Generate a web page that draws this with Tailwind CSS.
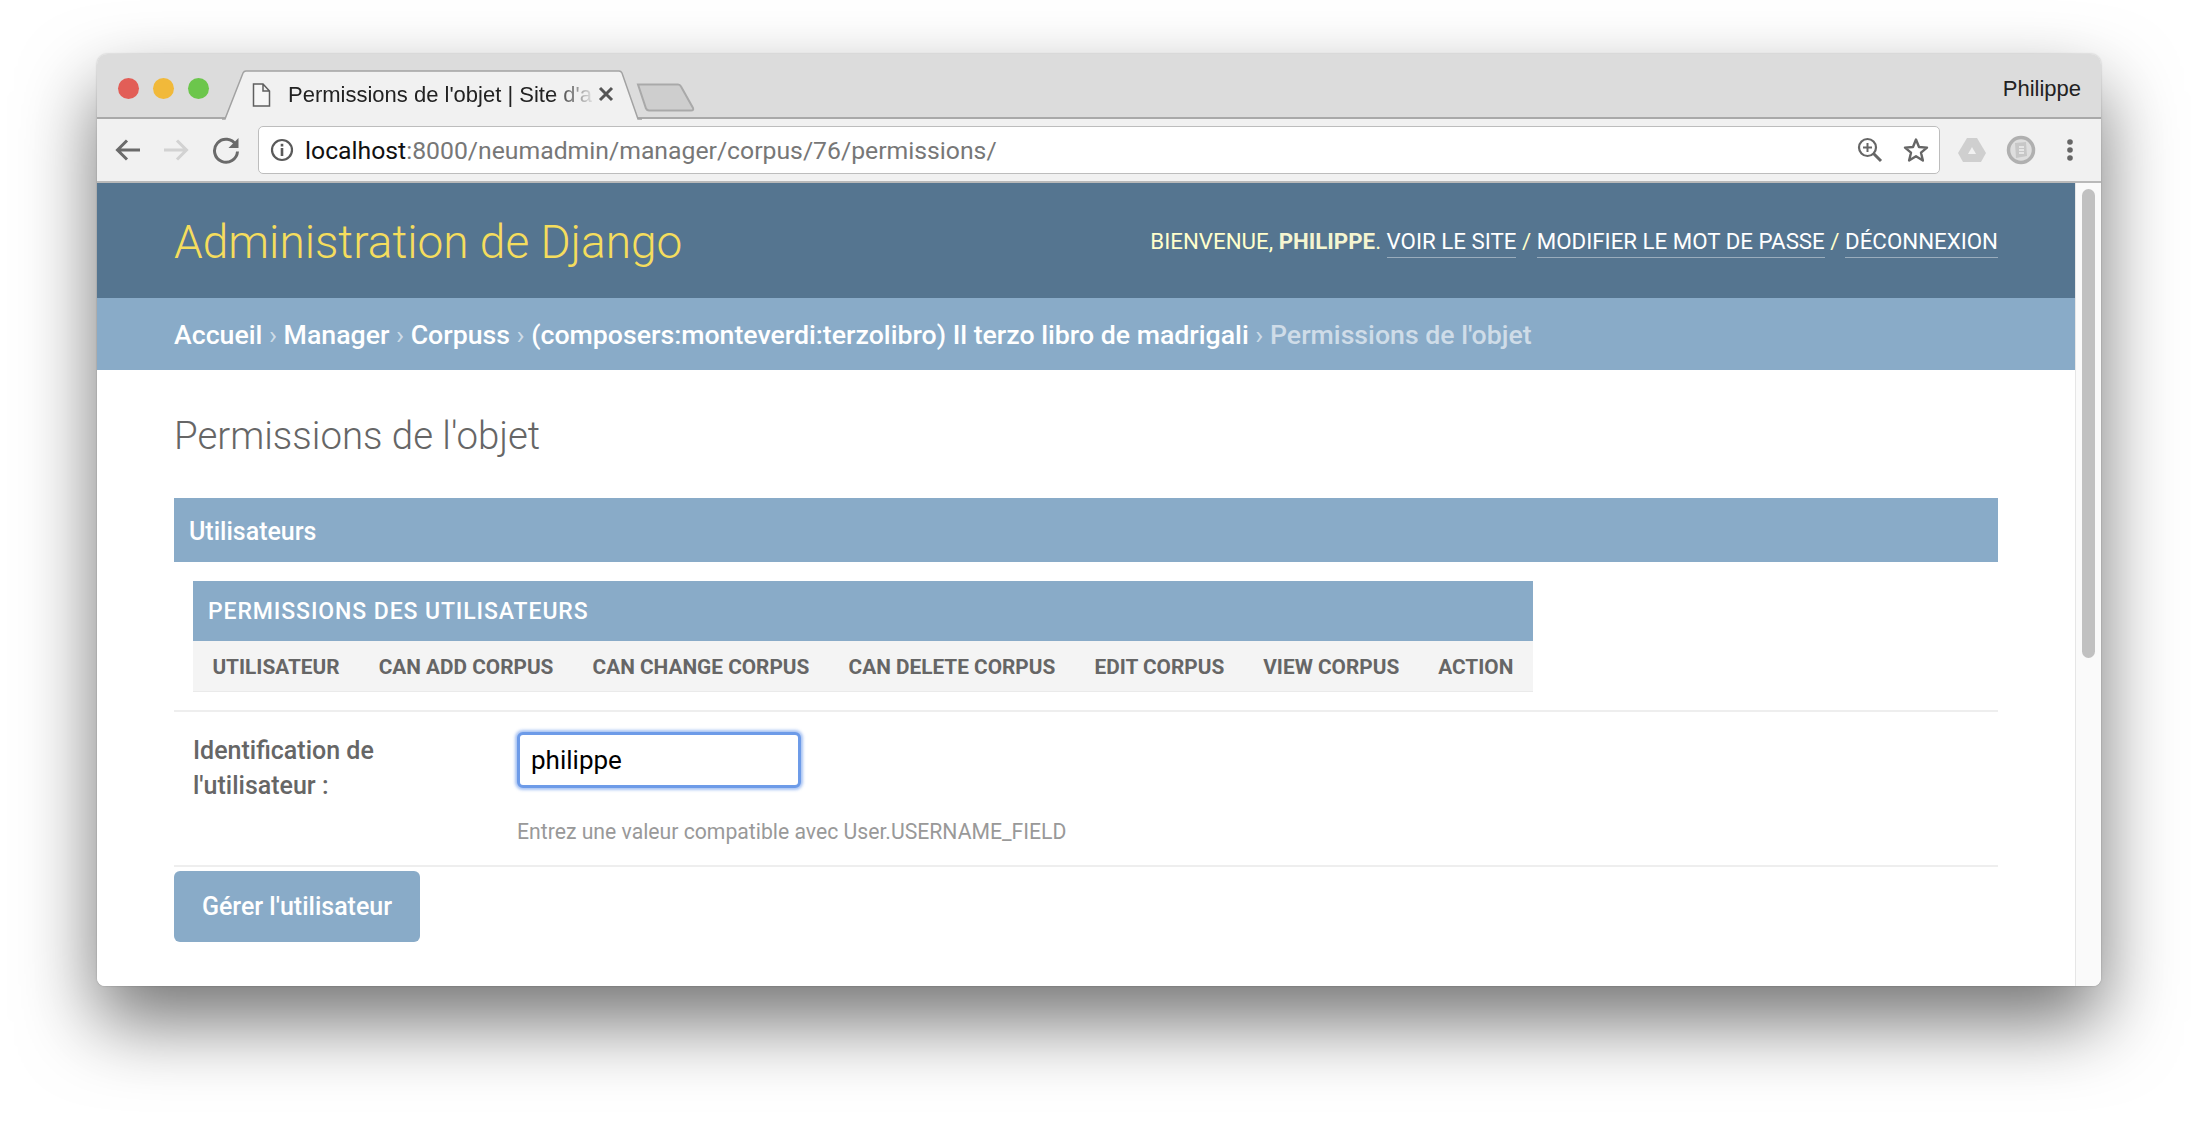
<!DOCTYPE html>
<html lang="fr">
<head>
<meta charset="utf-8">
<title>Permissions de l'objet</title>
<script src="https://cdn.jsdelivr.net/npm/@tailwindcss/browser@4"></script>
</head>
<body class="bg-white w-[2197px] h-[1125px] overflow-hidden font-['Roboto',sans-serif]">
<div class="pt-[54px] pl-[97px]">
  <div class="w-[2004px] h-[932px] rounded-t-[10px] rounded-b-[8px] overflow-hidden flex flex-col shadow-[0_36px_76px_rgba(0,0,0,0.55),0_0_2px_rgba(0,0,0,0.25)] bg-white">
    <!-- tab strip -->
    <div class="relative h-[65px] shrink-0 bg-[#dcdcdc] border-b-2 border-[#a9a9a9] flex items-center justify-end pr-[20px] pt-[6px]">
      <span class="absolute left-[21px] top-[24px] w-[21px] h-[21px] rounded-full bg-[#e25e57]"></span>
      <span class="absolute left-[56px] top-[24px] w-[21px] h-[21px] rounded-full bg-[#f1b93a]"></span>
      <span class="absolute left-[91px] top-[24px] w-[21px] h-[21px] rounded-full bg-[#6cc64c]"></span>
      <svg class="absolute left-[125px] top-[16px]" width="420" height="50" viewBox="0 0 420 50"><path d="M0 49 H3 L21 3 Q22 1 24 1 H397 Q399 1 400 3 L416 49 H420" fill="#f1f1f1" stroke="#a2a2a2" stroke-width="1.5"/></svg>
      <svg class="absolute left-[539px] top-[29px]" width="59" height="29" viewBox="0 0 59 29"><path d="M2 1.5 H42 Q44 1.5 45 3.5 L57 25 Q58 27.500 55 27.500 H13 Q11 27.500 10 25.500 Z" fill="#cecece" stroke="#a9a9a9" stroke-width="2"/></svg>
      <svg class="absolute left-[155px] top-[29px]" width="19" height="24" viewBox="0 0 19 24"><path d="M1.500 1 H11 L17.500 8 V23 H1.500 Z M11 1 V8 H17.500" fill="#fff" fill-opacity="0.4" stroke="#5f5f5f" stroke-width="1.500"/></svg>
      <span class="absolute left-[191px] top-[29px] w-[308px] h-[26px] whitespace-nowrap text-[22px] leading-[24px] text-[#222] font-['Liberation_Sans',sans-serif] [mask-image:linear-gradient(to_right,black_86%,transparent_100%)]">Permissions de l'objet | Site d'a</span>
      <svg class="absolute left-[501px] top-[32px]" width="16" height="16" viewBox="0 0 16 16"><path d="M2 2 L14 14 M14 2 L2 14" stroke="#555" stroke-width="3"/></svg>
      <span class="text-[22px] text-[#222] font-['Liberation_Sans',sans-serif] leading-none">Philippe</span>
    </div>
    <!-- toolbar -->
    <div class="h-[64px] shrink-0 bg-[#f1f1f1] border-b-2 border-[#b9b9b9] flex items-center pl-[16px] pr-[20px]">
      <svg width="30" height="30" viewBox="0 0 30 30" class="mr-[18px]"><path d="M27 15 H5 M14 5.500 L4.500 15 L14 24.500" fill="none" stroke="#6a6a6a" stroke-width="3"/></svg>
      <svg width="30" height="30" viewBox="0 0 30 30" class="mr-[19px]"><path d="M3 15 H25 M16 5.500 L25.500 15 L16 24.500" fill="none" stroke="#d2d2d2" stroke-width="3"/></svg>
      <svg width="30" height="30" viewBox="0 0 30 30" class="mr-[17px] ml-[1px]"><path d="M25 10 A11.500 11.500 0 1 0 26.500 16.500" fill="none" stroke="#6a6a6a" stroke-width="3"/><path d="M27.500 3 V13 H17.500 Z" fill="#6a6a6a"/></svg>
      <div class="w-[1682px] h-[48px] bg-white border border-[#bdbdbd] rounded-[5px] flex items-center pl-[11px] pr-[10px]">
        <svg width="24" height="24" viewBox="0 0 24 24" class="mr-[11px] shrink-0"><circle cx="12" cy="12" r="10" fill="none" stroke="#5a5a5a" stroke-width="2.200"/><rect x="10.700" y="10" width="2.600" height="8" fill="#5a5a5a"/><rect x="10.700" y="5.800" width="2.600" height="2.700" fill="#5a5a5a"/></svg>
        <span class="text-[24.750px] leading-none whitespace-nowrap text-[#777] flex-1 pt-[2px]"><span class="text-[#111]">localhost</span>:8000/neumadmin/manager/corpus/76/permissions/</span>
        <svg width="26" height="26" viewBox="0 0 26 26" class="mr-[20px]"><circle cx="10.500" cy="10.500" r="8.500" fill="none" stroke="#666" stroke-width="2.200"/><path d="M16.500 16.500 L24 24" stroke="#666" stroke-width="3"/><path d="M10.500 6 V15 M6 10.500 H15" stroke="#666" stroke-width="2"/></svg>
        <svg width="26" height="26" viewBox="0 0 26 26"><path d="M13 2.500 L16 10 L24 10.600 L18 15.700 L19.900 23.500 L13 19.300 L6.100 23.500 L8 15.700 L2 10.600 L10 10 Z" fill="none" stroke="#666" stroke-width="2.400" stroke-linejoin="round"/></svg>
      </div>
      <svg width="30" height="26" viewBox="0 0 30 26" class="ml-[17px]"><path d="M10 1 H20 L29 16 L24 25 H6 L1 16 Z" fill="#cfcfcf"/><path d="M15 10 L19 17 H11 Z" fill="#f1f1f1"/></svg>
      <svg width="30" height="30" viewBox="0 0 30 30" class="ml-[19px]"><circle cx="15" cy="15" r="12.500" fill="#dedede" stroke="#b0b0b0" stroke-width="3.500"/><path d="M9 8 L20 7 L21 21 L10 23 Z" fill="#c7c7c7"/><path d="M13 12 H18 M13 15 H18 M13 18 H18" stroke="#efefef" stroke-width="1.500"/></svg>
      <svg width="8" height="24" viewBox="0 0 8 24" class="ml-[30px]"><circle cx="4" cy="4" r="2.800" fill="#666"/><circle cx="4" cy="12" r="2.800" fill="#666"/><circle cx="4" cy="20" r="2.800" fill="#666"/></svg>
    </div>
    <!-- viewport -->
    <div class="flex flex-1 min-h-0">
      <main class="w-[1978px] shrink-0 bg-white flex flex-col">
        <header class="h-[115px] bg-[#557590] flex items-center justify-between px-[77px]">
          <h1 class="text-[46px] font-light text-[#f5dd5d] leading-none pt-[2px]">Administration de Django</h1>
          <div class="text-[22.300px] uppercase text-[#ffffcc] leading-none font-normal whitespace-nowrap pt-[1px]">
            Bienvenue, <strong class="font-bold text-[#f5f5d0]">Philippe</strong>. <a class="text-white border-b border-white/40 pb-[3px]">Voir le site</a> / <a class="text-white border-b border-white/40 pb-[3px]">Modifier le mot de passe</a> / <a class="text-white border-b border-white/40 pb-[3px]">Déconnexion</a>
          </div>
        </header>
        <nav class="h-[72px] bg-[#89abc8] flex items-center px-[77px] pt-[3px] text-[26.700px] text-white/60 whitespace-nowrap leading-none">
          <a class="font-medium text-white">Accueil</a>&nbsp;›&nbsp;<a class="font-medium text-white">Manager</a>&nbsp;›&nbsp;<a class="font-medium text-white">Corpuss</a>&nbsp;›&nbsp;<a class="font-medium text-white">(composers:monteverdi:terzolibro) Il terzo libro de madrigali</a>&nbsp;›&nbsp;<span class="font-medium">Permissions de l'objet</span>
        </nav>
        <div class="px-[77px] pt-[43px] flex-1">
          <h2 class="text-[38.400px] font-light text-[#666] leading-[46px] mb-[39px]">Permissions de l'objet</h2>
          <section class="h-[64px] bg-[#89abc8] flex items-center px-[15px] pt-[2px] text-[25px] font-medium text-white leading-none">Utilisateurs</section>
          <div class="pt-[19px] pl-[19px] border-b-2 border-[#eeeeee] pb-[18px]">
            <table class="w-[1340px] border-collapse">
              <caption class="h-[60px] bg-[#89abc8] text-left align-middle pl-[15px] pt-[2px] text-[23px] leading-[58px] font-medium text-white tracking-[0.9px] uppercase">Permissions des utilisateurs</caption>
              <thead>
                <tr class="h-[50px] bg-[#f4f4f4] border-b border-[#eaeaea] text-[20.800px] font-bold uppercase text-[#666] whitespace-nowrap text-left">
                  <th class="px-[19.400px] pt-[3px]">Utilisateur</th>
                  <th class="px-[19.400px] pt-[3px]">Can add corpus</th>
                  <th class="px-[19.400px] pt-[3px]">Can change corpus</th>
                  <th class="px-[19.400px] pt-[3px]">Can delete corpus</th>
                  <th class="px-[19.400px] pt-[3px]">Edit corpus</th>
                  <th class="px-[19.400px] pt-[3px]">View corpus</th>
                  <th class="px-[19.400px] pt-[3px]">Action</th>
                </tr>
              </thead>
            </table>
          </div>
          <div class="flex border-b-2 border-[#eeeeee] h-[155px] pl-[19px]">
            <label class="w-[324px] pt-[21px] text-[25px] leading-[35px] font-medium text-[#666]">Identification de<br>l'utilisateur :</label>
            <div class="pt-[20px]">
              <div class="w-[284px] h-[56px] bg-white border-[3px] border-[#6d9be8] rounded-[6px] shadow-[0_0_3px_2px_rgba(110,155,235,0.6)] flex items-center pl-[11px] text-[26px] text-black leading-none">philippe</div>
              <p class="mt-[32px] text-[21.200px] leading-[24px] text-[#999]">Entrez une valeur compatible avec User.USERNAME_FIELD</p>
            </div>
          </div>
          <button class="mt-[4px] w-[246px] h-[71px] rounded-[6px] bg-[#89abc8] text-white text-[25px] font-medium leading-none">Gérer l'utilisateur</button>
        </div>
      </main>
      <aside class="flex-1 bg-[#fafafa] border-l border-[#e6e6e6] pt-[6px] pl-[6px]">
        <div class="w-[13px] h-[469px] rounded-full bg-[#c1c1c1]"></div>
      </aside>
    </div>
  </div>
</div>
</body>
</html>
